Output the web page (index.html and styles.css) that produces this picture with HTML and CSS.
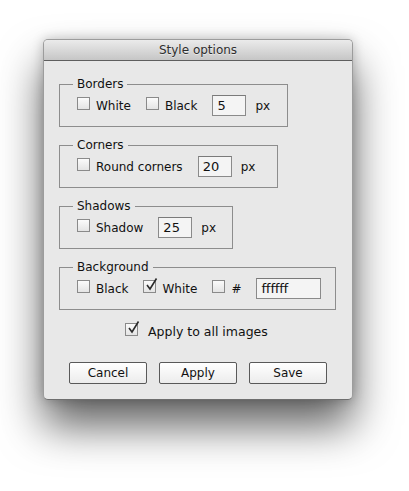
FILE: index.html
```html
<!DOCTYPE html>
<html lang="en">
<head>
    <meta charset="UTF-8">
    <title>Style options</title>
    <link rel="stylesheet" href="styles.css">
</head>
<body>

    <div class="window">
        <div class="titlebar">Style options</div>

        <div class="content">
            <!-- Borders -->
            <fieldset class="group group-borders">
                <legend>Borders</legend>
                <div class="row">
                    <label class="check"><span class="box"></span>White</label>
                    <label class="check"><span class="box"></span>Black</label>
                    <input class="field field-num" value="5">
                    <span class="unit">px</span>
                </div>
            </fieldset>

            <!-- Corners -->
            <fieldset class="group group-corners">
                <legend>Corners</legend>
                <div class="row">
                    <label class="check"><span class="box"></span>Round corners</label>
                    <input class="field field-num" value="20">
                    <span class="unit">px</span>
                </div>
            </fieldset>

            <!-- Shadows -->
            <fieldset class="group group-shadows">
                <legend>Shadows</legend>
                <div class="row">
                    <label class="check"><span class="box"></span>Shadow</label>
                    <input class="field field-num" value="25">
                    <span class="unit">px</span>
                </div>
            </fieldset>

            <!-- Background -->
            <fieldset class="group group-background">
                <legend>Background</legend>
                <div class="row">
                    <label class="check"><span class="box"></span>Black</label>
                    <label class="check"><span class="box"><svg class="tick" width="16" height="16" viewBox="0 0 16 16"><path d="M3 8 L6 12 L12.5 1.5" fill="none" stroke="#2b2b2b" stroke-width="1.6"/></svg></span>White</label>
                    <label class="check"><span class="box"></span>#</label>
                    <input class="field field-hex" value="ffffff">
                </div>
            </fieldset>

            <label class="check apply-all"><span class="box"><svg class="tick" width="16" height="16" viewBox="0 0 16 16"><path d="M3 8 L6 12 L12.5 1.5" fill="none" stroke="#2b2b2b" stroke-width="1.6"/></svg></span>Apply to all images</label>

            <div class="buttons">
                <button>Cancel</button>
                <button>Apply</button>
                <button>Save</button>
            </div>
        </div>
    </div>

</body>
</html>
```

FILE: styles.css
```css
html, body {
    min-height: 100vh;
}

body {
    margin: 0;
    background: #ffffff;
    font-family: 'DejaVu Sans', 'Noto Sans', sans-serif;
    font-size: 12px;
    color: #111;
    overflow: hidden;
}

.window {
    width: 308px;
    margin: 39px 0 0 43px;
    background: #e8e8e8;
    border: 1px solid #9c9c9c;
    border-bottom-color: #6e6e6e;
    border-radius: 5px;
    box-shadow: 0 26px 44px rgba(0, 0, 0, 0.62), 0 0 12px rgba(0, 0, 0, 0.22);
}

.titlebar {
    height: 20px;
    line-height: 21px;
    text-align: center;
    color: #2e2e2e;
    background: linear-gradient(#ebebeb, #c6c6c6);
    border-bottom: 1px solid #5e5e5e;
    border-radius: 4px 4px 0 0;
    text-shadow: 0 1px 0 rgba(255, 255, 255, 0.5);
}

.content {
    padding: 16px 0 15px 15px;
}

/* groupes */
.group {
    margin: 0 0 11px 0;
    padding: 3px 0 10px 17px;
    border: 1px solid #8d8d8d;
    box-sizing: border-box;
}

.group legend {
    padding: 0 4px;
    margin-left: -4px;
    line-height: 15px;
}

.group-borders { width: 229px; }
.group-corners { width: 219px; }
.group-shadows { width: 174px; }
.group-background { width: 277px; margin-bottom: 13px; }

.row {
    display: flex;
    align-items: center;
    height: 21px;
}

/* case à cocher : le bas de la case suit la ligne de base du texte */
.check {
    display: flex;
    align-items: baseline;
    margin-right: 15px;
    line-height: 15px;
}

.box {
    position: relative;
    width: 11px;
    height: 11px;
    margin-right: 6px;
    margin-bottom: -1px;
    border: 1px solid #8a8a8a;
    background: linear-gradient(#fbfbfb, #e4e4e4);
}

.tick {
    position: absolute;
    left: 0;
    top: -4px;
}

.field {
    height: 21px;
    box-sizing: border-box;
    margin: 0;
    padding: 0 4px;
    border: 1px solid #8a8a8a;
    border-top-color: #7a7a7a;
    background: #f4f4f4;
    font-family: inherit;
    font-size: 13px;
    color: #111;
}

.field-num { width: 34px; }
.field-hex { width: 65px; }

.unit {
    margin-left: 9px;
}

.apply-all {
    width: fit-content;
    margin: 0 auto 0 66px;
    height: 20px;
    font-size: 12.5px;
}

.apply-all .box {
    margin-right: 10px;
    margin-bottom: 5px;
}

.buttons {
    display: flex;
    gap: 12px;
    margin: 19px 0 0 10px;
}

button {
    width: 78px;
    height: 22px;
    padding: 0;
    border: 1px solid #595959;
    border-radius: 2px;
    background: linear-gradient(#ffffff, #ececec);
    font-family: inherit;
    font-size: 12px;
    color: #111;
}
```
